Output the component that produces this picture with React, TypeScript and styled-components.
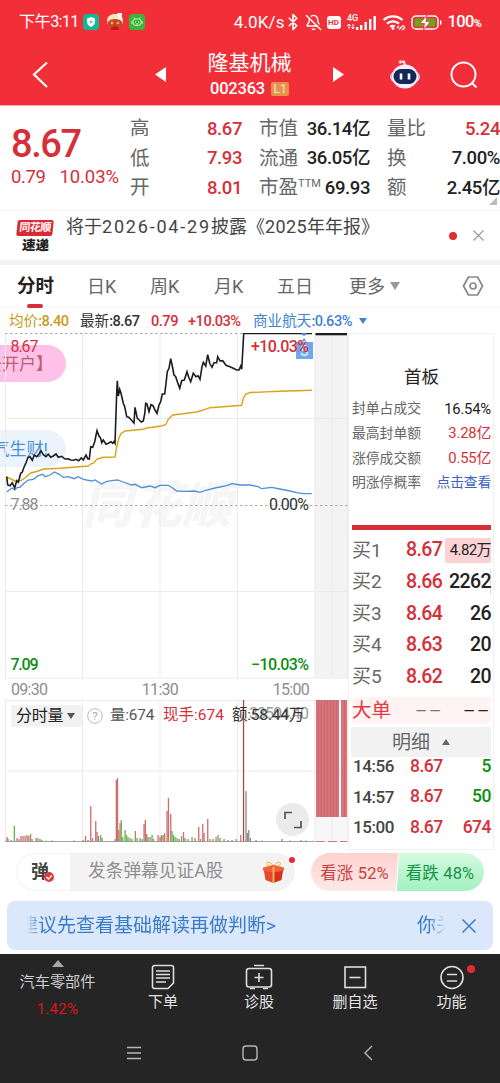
import React from "react";
import styled, { createGlobalStyle } from "styled-components";
import { BellOff, Bluetooth } from "lucide-react";

const RED = "#d5303a";
const GREEN = "#0a8f12";

const GlobalStyle = createGlobalStyle`
  * { box-sizing: border-box; }
  body {
    margin: 0;
    background: white;
    font-family: Roboto, "Noto Sans CJK SC", sans-serif;
    color: #222;
  }
  svg { display: block; flex: none; }
`;

const Page = styled.div`
  width: 500px;
  height: 1083px;
  overflow: hidden;
  display: flex;
  flex-direction: column;
  white-space: nowrap;
`;

type TxtProps = { $size?: number; $color?: string; $weight?: number; $ls?: number };

const Txt = styled.span<TxtProps>`
  font-size: ${(p) => p.$size ?? 16}px;
  line-height: 1;
  color: ${(p) => p.$color ?? "inherit"};
  font-weight: ${(p) => p.$weight ?? 400};
  letter-spacing: ${(p) => p.$ls ?? 0}px;
`;

/* ---------- header ---------- */

const StatusBar = styled.div`
  height: 44px;
  padding: 0 18px 0 19px;
  background: #f22f38;
  color: #fff;
  display: flex;
  align-items: center;
  justify-content: space-between;
`;

const StatusGroup = styled.div<{ $gap: number }>`
  display: flex;
  align-items: center;
  gap: ${(p) => p.$gap}px;
`;

const HdBadge = styled.span`
  width: 14px;
  height: 13px;
  border-radius: 3px;
  background: #fff;
  color: #f22f38;
  font-size: 8px;
  font-weight: 700;
  line-height: 13px;
  text-align: center;
`;

const BluetoothIcon = styled(Bluetooth)`
  margin: 0 -2px 0 -6px;
`;

const TitleBar = styled.div`
  height: 61px;
  background: #f22f38;
  color: #fff;
  display: grid;
  grid-template-columns: 154px 194px 152px;
  align-items: center;
`;

const TitleLeft = styled.div`
  display: flex;
  align-items: center;
  justify-content: space-between;
  margin: 0 -12px 0 32px;
`;

const TitleCenter = styled.div`
  display: flex;
  flex-direction: column;
  align-items: center;
  gap: 7px;
  padding: 1px 3px 0 0;
`;

const CodeRow = styled.div`
  display: flex;
  align-items: center;
  gap: 6px;
`;

const LevelBadge = styled.span`
  width: 18px;
  height: 14px;
  border-radius: 2px;
  background: #e8924c;
  font-size: 12px;
  line-height: 15px;
  text-align: center;
  color: #ffe6cf;
`;

const TitleRight = styled.div`
  display: flex;
  align-items: center;
  margin-left: -15px;
`;

/* ---------- quote ---------- */

const Quote = styled.section`
  height: 105px;
  border-top: 1px solid #ffa9ad;
  display: grid;
  grid-template-columns: 113px 112px 111px 113px;
  column-gap: 17px;
  position: relative;
`;

const PriceBox = styled.div`
  padding: 19px 0 0 11px;
  display: flex;
  flex-direction: column;
  color: ${RED};
`;

const ChangeRow = styled.div`
  display: flex;
  gap: 14px;
  margin-top: 5px;
`;

const QuoteCol = styled.div`
  padding-top: 8px;
`;

const QuoteRow = styled.div`
  height: 29.6px;
  display: flex;
  align-items: center;
  justify-content: space-between;
  color: #666;
`;

const Sup = styled.sup`
  font-size: 11px;
  line-height: 0;
  vertical-align: 7px;
`;

const Corner = styled.i`
  position: absolute;
  right: 3px;
  bottom: 5px;
  border-left: 8px solid transparent;
  border-bottom: 8px solid #bbb;
`;

const News = styled.section`
  height: 50px;
  border-top: 1px solid #f3f3f3;
  display: flex;
  align-items: center;
`;

const NewsLogo = styled.div`
  width: 38px;
  margin-left: 16px;
  display: flex;
  flex-direction: column;
  align-items: center;
  gap: 3px;
`;

const LogoTop = styled.span`
  width: 36px;
  height: 16px;
  background: #dc2832;
  border-radius: 2px;
  transform: skewX(-6deg);
  color: #fff;
  font-weight: 700;
  font-size: 11px;
  line-height: 16px;
  letter-spacing: -0.6px;
  text-align: center;
`;

const LogoBottom = styled.span`
  font-size: 13.5px;
  font-weight: 900;
  line-height: 13px;
  transform: skewX(-4deg);
`;

const NewsText = styled.div`
  width: 383px;
  margin: -18px 0 0 12px;
  font-size: 18px;
  line-height: 1;
  color: #444;
`;

const Dot = styled.i<{ $size: number }>`
  width: ${(p) => p.$size}px;
  height: ${(p) => p.$size}px;
  border-radius: 50%;
  background: #e32b33;
`;

/* ---------- tabs ---------- */

const Tabs = styled.nav`
  height: 48px;
  border-top: 5px solid #f3f3f3;
  border-bottom: 1px solid #f5f5f5;
  display: flex;
  align-items: center;
  padding: 0 15px 0 17px;
`;

const Tab = styled.div<{ $active?: boolean; $width: number }>`
  width: ${(p) => p.$width}px;
  font-size: ${(p) => (p.$active ? 18.5 : 18)}px;
  line-height: 43px;
  font-weight: ${(p) => (p.$active ? 700 : 400)};
  color: ${(p) => (p.$active ? "#222" : "#666")};
  display: flex;
  align-items: center;
  position: relative;
  &::after {
    content: "";
    display: ${(p) => (p.$active ? "block" : "none")};
    position: absolute;
    left: 10px;
    bottom: 0;
    width: 16px;
    height: 4px;
    border-radius: 2px;
    background: ${RED};
  }
`;

const Triangle = styled.i<{ $w: number; $h: number; $color: string; $up?: boolean }>`
  display: inline-block;
  border-left: ${(p) => p.$w / 2}px solid transparent;
  border-right: ${(p) => p.$w / 2}px solid transparent;
  ${(p) => (p.$up ? "border-bottom" : "border-top")}: ${(p) => p.$h}px solid ${(p) => p.$color};
`;

const Legend = styled.div`
  height: 26px;
  display: flex;
  align-items: center;
  padding-left: 9px;
  margin-bottom: -1px;
`;

const LegendItem = styled.div<{ $width: number; $color: string }>`
  width: ${(p) => p.$width}px;
  color: ${(p) => p.$color};
  font-size: 14.6px;
  line-height: 18px;
  display: flex;
  align-items: center;
  b {
    font-weight: 500;
    font-size: 14.6px;
    letter-spacing: -0.5px;
  }
`;

/* ---------- market ---------- */

const Market = styled.section`
  display: grid;
  grid-template-columns: 348px 146px;
  height: 509px;
`;

const ChartCol = styled.div`
  display: flex;
  flex-direction: column;
`;

const PriceChart = styled.div`
  position: relative;
  height: 346px;
  overflow: hidden;
`;

const Bullet = styled.div<{ $top: number; $bg: string; $color: string; $pad: number }>`
  position: absolute;
  left: -40px;
  top: ${(p) => p.$top}px;
  width: 106px;
  height: 37px;
  padding-right: ${(p) => p.$pad}px;
  border-radius: 19px;
  background: ${(p) => p.$bg};
  color: ${(p) => p.$color};
  font-size: 17px;
  line-height: 38px;
  display: flex;
  justify-content: flex-end;
`;

const TimeAxis = styled.div`
  height: 21px;
  display: flex;
  justify-content: space-between;
  align-items: center;
  padding: 0 39px 0 11px;
`;

const VolumeChart = styled.div`
  position: relative;
  height: 142px;
`;

const VolumeHead = styled.div`
  position: absolute;
  top: 5px;
  left: 11px;
  height: 22px;
  display: flex;
  align-items: center;
`;

const VolumeSelect = styled.div`
  width: 71px;
  height: 22px;
  background: #f2f2f2;
  display: flex;
  align-items: center;
  gap: 4px;
  padding-left: 5px;
  margin-right: 5px;
`;

const Expand = styled.div`
  position: absolute;
  left: 276px;
  top: 103px;
  width: 33px;
  height: 33px;
  border-radius: 50%;
  background: #ebebeb;
  display: grid;
  place-items: center;
`;

const Book = styled.div`
  border: 1px solid #f2f2f2;
  padding: 0 2px 0 3px;
  display: flex;
  flex-direction: column;
`;

const BoardTitle = styled.h2`
  margin: 33px 0 10px;
  font-size: 17.5px;
  line-height: 20px;
  font-weight: 400;
  text-align: center;
`;

const StatRow = styled.div`
  height: 24.6px;
  display: flex;
  align-items: center;
  justify-content: space-between;
`;

const RedBar = styled.div`
  height: 5px;
  margin-top: 30px;
  margin-bottom: 4px;
  background: ${RED};
`;

const BidRow = styled.div<{ $fill: number }>`
  height: 31.6px;
  display: grid;
  grid-template-columns: 54px 39px 1fr;
  align-items: center;
  background: linear-gradient(#fbd3d5, #fbd3d5) right center / ${(p) => p.$fill}px 25px no-repeat;
  > :last-child { text-align: right; }
`;

const BigOrder = styled.div`
  height: 27px;
  margin-top: 5px;
  background: #fff3f3;
  border-radius: 4px;
  display: grid;
  grid-template-columns: 54px 37px 1fr;
  align-items: center;
  > :not(:first-child) { text-align: right; }
`;

const DetailHead = styled.div`
  height: 30px;
  margin-top: 3px;
  margin-left: -1px;
  background: #f2f2f3;
  display: flex;
  align-items: center;
  justify-content: center;
  gap: 12px;
`;

const TradeRow = styled.div`
  height: 30.5px;
  margin-top: -6px;
  margin-bottom: 6px;
  padding-left: 1px;
  display: grid;
  grid-template-columns: 57px 33px 1fr;
  align-items: center;
  > :last-child { text-align: right; }
`;

/* ---------- danmaku + banner ---------- */

const Danmaku = styled.section`
  height: 38px;
  margin: 11px 16px 0;
  display: flex;
`;

const InputPill = styled.div`
  width: 279px;
  height: 38px;
  border-radius: 19px;
  background: #f3f3f3;
  display: flex;
  align-items: center;
  position: relative;
`;

const DanmakuIcon = styled.div`
  width: 55px;
  height: 38px;
  border: 1px solid #f3f3f3;
  border-radius: 19px 0 0 19px;
  background: #fff;
  padding-left: 14px;
  display: flex;
  align-items: center;
  margin-right: 17px;
  svg { margin: 10px 0 0 -5px; }
`;

const PillDot = styled(Dot)`
  position: absolute;
  right: 0;
  top: 4px;
`;

const Vote = styled.div<{ $up?: boolean }>`
  width: ${(p) => (p.$up ? 87 : 88)}px;
  height: 38px;
  display: grid;
  place-items: center;
  font-size: 16.5px;
  letter-spacing: 0.15px;
  ${(p) =>
    p.$up
      ? `margin-left: 16px;
         border-radius: 19px 0 0 19px;
         color: #c9403f;
         background: linear-gradient(#fdd3d0, #fde9e8);
         clip-path: polygon(0 0, 100% 0, 97.5% 100%, 0 100%);`
      : `margin-left: -2px;
         border-radius: 0 19px 19px 0;
         color: #149346;
         background: linear-gradient(#d3fae0, #a4f1c0);
         clip-path: polygon(3.5% 0, 100% 0, 100% 100%, 1% 100%);`}
`;

const Banner = styled.section`
  height: 49px;
  margin: 10px 7px 4px;
  border-radius: 8px;
  background: #dbe8fb;
  display: flex;
  align-items: center;
  color: #3a7bc8;
`;

const Marquee = styled.div`
  width: 418px;
  margin-left: 20px;
  overflow: hidden;
  font-size: 19px;
  line-height: 30px;
  mask-image: linear-gradient(90deg, transparent, #000 14px, #000 402px, transparent);
  display: flex;
  justify-content: space-between;
  > :first-child { margin-left: -8px; }
  > :last-child { margin-right: -10px; }
`;

/* ---------- bottom ---------- */

const Bottom = styled.footer`
  flex: 1;
  background: #252525;
  color: #e3e3e3;
`;

const NavRow = styled.div`
  height: 76px;
  display: grid;
  grid-template-columns: 115px 96px 96px 96px 97px;
`;

const NavItem = styled.div`
  display: flex;
  flex-direction: column;
  align-items: center;
  padding-top: 10px;
  gap: 5px;
  position: relative;
`;

const SectorItem = styled.div`
  display: flex;
  flex-direction: column;
  align-items: center;
  padding-top: 6px;
`;

const NavDot = styled(Dot)`
  position: absolute;
  left: 64px;
  top: 11px;
`;

const SystemRow = styled.div`
  display: grid;
  grid-template-columns: 116px 121px 10px;
  padding: 14px 0 0 126px;
`;

/* ---------- data ---------- */

const pricePoints =
  "6.7,143.7 7.7,152 10,152.7 12.3,149.7 14.7,155 16.7,147.7 18.3,149.3 20.7,140.3 22.3,139 24,134.3 26,129.7 28,124.3 30,123.7 32.3,127.3 34.3,122 36.7,123.7 39,121 41,117.7 43.3,121.7 46,123.7 48.3,121.3 50.7,124.3 53.3,123 56,121 58.3,124.3 61.7,123.3 65,126 68.3,125.7 70.7,127 73.3,127.3 76,126.3 78.7,127.7 81.3,125 83.3,127 86,122 87.7,125.7 89.3,126 90.7,113.7 92.7,114.3 94.7,108.7 97,97.7 99,103 100.7,105.3 101.7,109.7 103.3,107 106,111.3 108.3,110.3 111,108.7 112.7,110.3 114,108.7 115,110.3 116,80.3 116.7,60.3 117.3,47.7 118.3,63 119.7,56.3 121,60.3 123.3,70.3 124.7,73.7 126.7,83.7 128.7,84.3 131.3,87 134,90 135,74.3 137.3,85.3 139.3,87 141.3,89 143.3,88 144.7,81 145.7,70.3 147,71 149,78.7 151,71.7 153,72.7 155,77 157,80.3 159,72 160.7,68.7 162.3,61 164.7,61 166,50.3 167.3,38.7 169,35.3 170.7,25.7 172.3,33 174,42 175.7,43.7 177.7,49.7 179.7,55.3 181.7,47.7 184.3,47 187,38.7 188.7,44.3 190.7,48.7 193.3,40.3 196,43.7 198,42.7 200,46.3 202,33.7 203.3,29.3 205.7,33 207.7,21.7 209.7,30.3 212,34.3 214,29.7 216.7,29.7 217.7,23.7 220,28 222.7,27.7 226,32.3 230,33.7 233.3,35.3 236.7,37 239,37 240.7,33 241.7,36.3 243,13.7 243.7,0.5 312,0.5";

const avgPoints =
  "6.7,144 15,148 20,148 25,145 30.7,140 36.7,138.5 43.3,136 60,135.3 88.3,133 90.7,131 94,129.7 96.7,126.3 103,124.3 115,124 116.7,114 118.3,107 120.7,101 125,98 143.3,96.3 146.7,95 160,93.3 165.7,91.7 168.3,86.3 172.7,82 183,80.7 196.7,79 205,76.3 210,74.7 223,73.7 241.7,72.3 243.3,65.3 246,61 250,59.5 280,58.3 312,57.3";

const sectorPoints =
  "6.7,159 9.3,157 12,155 14.7,157 17.3,154.3 20,154.3 24,150.3 28.3,147 33.3,146.3 38.3,142.7 42.7,141.3 45,143.7 50,142 54.3,139 59.3,141.3 63.3,144.3 68.3,143.7 74,145.7 78.3,143.7 83.3,146.3 91.7,148 95,147 101.7,151 106,148.7 111.7,147.7 117.3,147 123.3,149 131.7,152 135,151.3 141.7,154.7 150,153 155,154.7 160,152.3 168.3,152.3 172.7,155 176.7,158 185,158.3 195,158 200,159.3 206.7,157 215,155 226.7,152.7 232,150.7 240,152 250,152 258,153.7 261.7,155.7 271.7,154.3 280,156 290,158 296.7,159.7 303,160.7 311.7,160.7";

const R = "#d36a6c";
const G = "#62b34c";
const N = "#8b8b8b";

// x, height, colour
const volumeBars: [number, number, string][] = [
  [7, 5, R], [8, 3, N], [11, 2, G], [14.3, 16, G], [17, 4, R], [19, 3, N], [21, 6, R],
  [23, 6, R], [25, 6, R], [27, 7, R], [28.7, 6, G], [30.5, 8, R], [32, 3, N], [36, 4, R], [38, 4, G],
  [40, 3, R], [42, 2, G], [46, 1.5, N], [52, 1.5, N], [58, 1, N], [66, 1, N], [74, 1.5, N],
  [83, 2, N], [85.5, 6, R], [88, 2, R], [90.7, 36, R], [92.5, 4, N], [95.7, 21, R], [97, 10, R],
  [98.5, 6, N], [100.7, 7, G], [102, 4, G], [115, 3, N], [116.3, 62, R], [117.5, 64, R],
  [118.8, 12, R], [120, 19, G], [121.2, 22, "#a58a62"], [122.8, 5, G], [125, 12, G], [126.5, 7, G],
  [128, 5, G], [130, 4, G], [132, 3, G], [135.3, 11, "#a58a62"], [137, 4, G], [140, 4, G],
  [142, 3, N], [144, 18, R], [145.3, 22, R], [146.7, 8, N], [148, 5, G], [150, 5, R],
  [152, 7, G], [153.5, 3, G], [158, 7, R], [160, 5, R], [161.5, 7, R], [163, 7, G], [164.5, 9, R],
  [167, 31, R], [168.4, 44, R], [170.7, 28, R], [172, 11, G], [173.5, 7, G], [175, 5, G],
  [177, 4, G], [179, 3, R], [181.5, 6, G], [183.5, 10, R], [185, 4, N], [188, 3, G], [192, 5, G],
  [195, 4, R], [198.7, 15, R], [200.5, 3, G], [202.7, 18, R], [204, 9, R], [207.7, 23, R],
  [210, 3, G], [213, 3, R], [216, 5, "#a58a62"], [218, 7, "#a58a62"], [220, 4, G], [224, 3, N],
  [228, 2, R], [232, 2, N], [236, 3, G], [240.7, 7, R], [243.5, 142, "#b04448"], [246, 51, N],
  [247.5, 9, N], [248.7, 12, N], [250.3, 4, N], [256, 2, N], [262, 1.5, N], [270, 1, N],
  [282, 3, N], [290, 1.5, N], [301, 2, N], [306, 1.5, N],
];

const stats = [
  ["封单占成交", "16.54%", "#222"],
  ["最高封单额", "3.28亿", RED],
  ["涨停成交额", "0.55亿", RED],
  ["明涨停概率", "点击查看", "#3b62c4"],
];

const bids: [string, string, string, number][] = [
  ["买1", "8.67", "4.82万", 46],
  ["买2", "8.66", "2262", 1],
  ["买3", "8.64", "26", 0],
  ["买4", "8.63", "20", 0],
  ["买5", "8.62", "20", 0],
];

const trades = [
  ["14:56", "8.67", "5", GREEN],
  ["14:57", "8.67", "50", GREEN],
  ["15:00", "8.67", "674", RED],
];

const quoteCols: [React.ReactNode, string, string][][] = [
  [["高", "8.67", RED], ["低", "7.93", RED], ["开", "8.01", RED]],
  [["市值", "36.14亿", "#222"], ["流通", "36.05亿", "#222"], [<>市盈<Sup>TTM</Sup></>, "69.93", "#222"]],
  [["量比", "5.24", RED], ["换", "7.00%", "#222"], ["额", "2.45亿", "#222"]],
];

/* ---------- parts ---------- */

const GridLines = ({ height, rows }: { height: number; rows: number[] }) => (
  <g stroke="#ebebeb">
    {[5.5, 82.5, 160, 237.5, 315, 332, 347.5].map((x) => (
      <path key={x} d={`M${x} 0V${height}`} />
    ))}
    {rows.map((y) => (
      <path key={y} d={`M5 ${y}H348`} />
    ))}
  </g>
);

const Status = () => (
  <StatusBar>
    <StatusGroup $gap={4}>
      <Txt $size={16.3} $weight={400} $ls={-0.7}>下午3:11</Txt>
      <svg width="16" height="16" viewBox="0 0 16 16">
        <rect width="16" height="16" rx="3.5" fill="#12b894" />
        <path d="M8 3l4 1.400v3.400c0 2.600-1.800 4.200-4 5.200-2.200-1-4-2.600-4-5.200V4.400z" fill="#fff" />
        <path d="M8.700 5.200L6.500 8.300h1.400l-.5 2.300 2.200-3.100H8.200z" fill="#12b894" />
      </svg>
      <svg width="22" height="18" viewBox="-4 0 22 18">
        <path d="M0 8C0 3 4 1 8 1s8 2 8 7l-1 4H1z" fill="#f6e3c2" />
        <path d="M10 0h5v7h-3z" fill="#fff7e8" />
        <path d="M1 9c2-4 12-4 14 0v4c-1 4-13 4-14 0z" fill="#c8452b" />
        <circle cx="5" cy="10" r="1.300" fill="#f2b33d" />
        <circle cx="11" cy="10" r="1.300" fill="#f2b33d" />
        <path d="M4 17c0-5 8-5 8 0z" fill="#d30f16" />
      </svg>
      <svg width="16" height="16" viewBox="0 0 16 16">
        <rect width="16" height="16" rx="3.5" fill="#3db53a" />
        <rect x="4" y="5" width="8" height="6.500" rx="2.500" fill="none" stroke="#c6f0b9" />
        <path d="M5 3.500l1 1.500M11 3.500L10 5M6.500 7.500v1M9.500 7.500v1M6.500 10h3M3 7v3M13 7v3" stroke="#c6f0b9" />
      </svg>
    </StatusGroup>
    <StatusGroup $gap={5}>
      <Txt $size={17} $weight={400} $ls={0.1}>4.0K/s</Txt>
      <BluetoothIcon size={18} strokeWidth={2.2} />
      <BellOff size={17} strokeWidth={2} />
      <HdBadge>HD</HdBadge>
      <svg width="31" height="18" viewBox="0 0 31 18" fill="#fff">
        <text x="1" y="8" fontSize="9" fontWeight="500">4G</text>
        <path d="M3 11v5M1 13l2-2 2 2M7 16v-5M5.500 14L7 16l1.500-2" stroke="#fff" fill="none" />
        <path d="M10 14h2.400v3H10zM14 12h2.400v5H14zM18.500 9h2.400v8h-2.400zM23 6h2.400v11H23zM27.500 3h2.400v14h-2.400z" />
      </svg>
      <svg width="24" height="17" viewBox="0 0 24 17" fill="none" stroke="#fff" strokeWidth="2.300">
        <path d="M1.500 6a14 14 0 0 1 19 0M5 9.700a9 9 0 0 1 12 0M8.300 13a4 4 0 0 1 4.500-.5" />
        <circle cx="11" cy="14.500" r="1" fill="#fff" strokeWidth="1" />
        <path d="M15 14l2-2M17 15.500l3.500-3.500a1.600 1.600 0 0 1 2 2L20 16" strokeWidth="1.300" />
      </svg>
      <svg width="32" height="15" viewBox="0 0 32 15">
        <rect x="1" y="1" width="26" height="13" rx="4" fill="none" stroke="#fff" strokeWidth="1.500" />
        <rect x="3.500" y="3.500" width="21" height="8" rx="1.500" fill="#68a81b" />
        <path d="M29 5c2 0 2 5 0 5z" fill="#fff" />
        <path d="M16 0l-7 8.500h4.500L12.500 15l7-8.500H15z" fill="#fff" stroke="#f22f38" strokeWidth=".8" />
      </svg>
      <Txt $size={16.5} $weight={500} $ls={-0.6}>
        100<Txt $size={11} $weight={700}>%</Txt>
      </Txt>
    </StatusGroup>
  </StatusBar>
);

const Header = () => (
  <TitleBar>
    <TitleLeft>
      <svg width="16" height="28" viewBox="0 0 16 28" fill="none" stroke="#fff" strokeWidth="2.200">
        <path d="M15 1.500L2 13.500 15 26" />
      </svg>
      <svg width="11" height="15" viewBox="0 0 11 15"><path d="M11 0v15L0 7.500z" fill="#fff" /></svg>
    </TitleLeft>
    <TitleCenter>
      <Txt $size={21}>隆基机械</Txt>
      <CodeRow>
        <Txt $size={16.5} $weight={500} $ls={-0.2}>002363</Txt>
        <LevelBadge>L1</LevelBadge>
      </CodeRow>
    </TitleCenter>
    <TitleRight>
      <svg width="11" height="15" viewBox="0 0 11 15"><path d="M0 0v15l11-7.500z" fill="#fff" /></svg>
      <svg width="32" height="30" viewBox="0 0 32 30" style={{ marginLeft: 45 }}>
        <path d="M11 2l4-.5 1 4" fill="none" stroke="#f5e5f5" strokeWidth="2" />
        <circle cx="11.500" cy="2" r="1.800" fill="#f6c6d2" />
        <ellipse cx="16" cy="17" rx="15" ry="8" fill="#cfc6f2" />
        <ellipse cx="16" cy="16.500" rx="13" ry="12" fill="#f5f0fd" />
        <rect x="4.500" y="9" width="23" height="15" rx="7.500" fill="#16275a" />
        <path d="M12 13.500v6M20 13.500v6" stroke="#fff" strokeWidth="2.600" />
      </svg>
      <svg width="28" height="28" viewBox="0 0 28 28" fill="none" stroke="#fff" strokeWidth="1.900" style={{ marginLeft: 29 }}>
        <circle cx="13.500" cy="13.500" r="12" />
        <path d="M22 22l4.500 4.500" />
      </svg>
    </TitleRight>
  </TitleBar>
);

const IntradayChart = () => (
  <PriceChart>
    <Bullet $top={12} $pad={13} $bg="#ffc1e8" $color="#b8606c">去开户】</Bullet>
    <Bullet $top={97} $pad={18} $bg="#ebf3fd" $color="#4d90d8">和气生财!</Bullet>
    <svg width="348" height="346" viewBox="0 0 348 346" style={{ position: "relative" }}>
      <text x="82" y="190" fontSize="50" fontWeight="900" fontStyle="italic" fill="#f6f6f6">同花顺</text>
      <rect x="315" y="0" width="33" height="345" fill="#f3f3f4" />
      <GridLines height={345} rows={[85.5, 258.5, 345]} />
      <path d="M5 .5H312M5 172.500H348" stroke="#aaa" strokeDasharray="2.500 2.500" />
      <polyline points={sectorPoints} fill="none" stroke="#4f8fdc" strokeWidth="1.300" />
      <polyline points={avgPoints} fill="none" stroke="#d9a31a" strokeWidth="1.400" />
      <polyline points={pricePoints} fill="none" stroke="#1d1d1f" strokeWidth="1.600" />
      <path d="M315.500 .8H347" stroke="#1d1d1f" strokeWidth="3" />
      <rect x="296" y="9" width="17" height="17" fill="#70a8ee" />
      <path d="M301 1l3-2 3 2-3 2zM302 8l2-3 2 3z" fill="#4f8fdc" />
      <text x="300" y="22.500" fontSize="14" fontWeight="500" fill="#dcebff">S</text>
      <g fontSize="16" fontWeight="400">
        <text x="10.500" y="19" fill={RED} textLength="28">8.67</text>
        <text x="10.500" y="177" fill="#8d8d8d" textLength="28">7.88</text>
        <text x="10.500" y="337" fill={GREEN} fontWeight="500" textLength="28">7.09</text>
        <text x="251" y="19" fill={RED} fontWeight="500" textLength="58">+10.03%</text>
        <text x="269" y="177" fill="#333" textLength="40">0.00%</text>
        <text x="251" y="337" fill={GREEN} fontWeight="500" textLength="58">−10.03%</text>
      </g>
    </svg>
  </PriceChart>
);

const Volume = () => (
  <VolumeChart>
    <svg width="348" height="142" viewBox="0 0 348 142">
      <rect x="315" y="0" width="33" height="142" fill="#f7f7f7" />
      <GridLines height={142} rows={[0.5, 71]} />
      <text x="249" y="19" fontSize="16" fill="#9a9a9a" textLength="60">33504.40</text>
      {volumeBars.map(([x, h, c]) => (
        <rect key={x} x={x - 0.6} y={142 - h} width="1.3" height={h} fill={c} />
      ))}
      <rect x="316" y="0" width="23" height="117" fill="#d9737a" />
      <rect x="341" y="0" width="6" height="117" fill="#d9737a" />
      {[318, 321, 324, 327, 330, 333, 336, 344].map((x) => (
        <path key={x} d={`M${x}.5 0V117`} stroke="#c5666c" strokeWidth=".8" />
      ))}
      <path d="M5 141.500H315" stroke="#999" strokeWidth=".9" />
      <path d="M316 141.500H347" stroke="#d9737a" strokeDasharray="9 3" />
    </svg>
    <VolumeHead>
      <VolumeSelect>
        <Txt $size={16} $ls={-0.2}>分时量</Txt>
        <Triangle $w={8} $h={6} $color="#555" />
      </VolumeSelect>
      <svg width="16" height="16" viewBox="0 0 16 16">
        <circle cx="8" cy="8" r="7.300" fill="none" stroke="#b9b9b9" />
        <text x="8" y="12" fontSize="11.500" textAnchor="middle" fill="#aaa">?</text>
      </svg>
      <Txt $size={15.3} $color="#555" $ls={-0.1} style={{ width: 53, marginLeft: 7 }}>量:674</Txt>
      <Txt $size={15.5} $color={RED} $ls={0} style={{ width: 69 }}>现手:674</Txt>
      <Txt $size={15.5} $color="#333" $ls={-0.2}>额:58.44万</Txt>
    </VolumeHead>
    <Expand>
      <svg width="18" height="18" viewBox="0 0 18 18" fill="none" stroke="#555" strokeWidth="1.700">
        <path d="M1 8V1.500h7M17 10v6.500h-7" />
      </svg>
    </Expand>
  </VolumeChart>
);

const OrderBook = () => (
  <Book>
    <BoardTitle>首板</BoardTitle>
    {stats.map(([label, value, color]) => (
      <StatRow key={label}>
        <Txt $size={13.8} $color="#666">{label}</Txt>
        <Txt $size={label === "明涨停概率" ? 13.8 : 14.8} $color={color} $ls={-0.2}>{value}</Txt>
      </StatRow>
    ))}
    <RedBar />
    {bids.map(([label, price, amount, fill]) => (
      <BidRow key={label} $fill={fill}>
        <Txt $size={19} $color="#666">{label}</Txt>
        <Txt $size={19.5} $color={RED} $weight={500} $ls={-0.6}>{price}</Txt>
        <Txt $size={fill > 10 ? 15 : 19.5} $weight={fill > 10 ? 400 : 500} $ls={-0.6}>{amount}</Txt>
      </BidRow>
    ))}
    <BigOrder>
      <Txt $size={19.5} $color="#e23b40">大单</Txt>
      <Txt $size={19} $color="#777" $ls={1.5}>––</Txt>
      <Txt $size={19} $ls={1.5}>––</Txt>
    </BigOrder>
    <DetailHead>
      <Txt $size={19} $color="#666">明细</Txt>
      <Triangle $up $w={8} $h={6} $color="#666" />
    </DetailHead>
    {trades.map(([time, price, amount, color]) => (
      <TradeRow key={time}>
        <Txt $size={17} $color="#444" $weight={500} $ls={-0.4}>{time}</Txt>
        <Txt $size={17.5} $color={RED} $weight={500} $ls={-0.5}>{price}</Txt>
        <Txt $size={17.5} $color={color} $weight={500} $ls={-0.5}>{amount}</Txt>
      </TradeRow>
    ))}
  </Book>
);

const BottomBar = () => (
  <Bottom>
    <NavRow>
      <SectorItem>
        <Triangle $up $w={12} $h={7} $color="#a9a9a9" />
        <Txt $size={15.2} $color="#cfcfcf" style={{ marginTop: 8 }}>汽车零部件</Txt>
        <Txt $size={15} $color="#e0121b" $ls={0.3} style={{ marginTop: 12 }}>1.42%</Txt>
      </SectorItem>
      <NavItem>
        <svg width="24" height="26" viewBox="0 0 24 26" fill="none" stroke="#ddd" strokeWidth="1.600">
          <path d="M3.500 1.500h17a2 2 0 0 1 2 2V19l-5.500 5.500H3.500a2 2 0 0 1-2-2v-19a2 2 0 0 1 2-2zM5 7h14M5 10.500h14M5 14h14M5 18h10" />
        </svg>
        <Txt $size={15}>下单</Txt>
      </NavItem>
      <NavItem>
        <svg width="28" height="26" viewBox="0 0 28 26" fill="none" stroke="#ddd" strokeWidth="1.600">
          <rect x="1.500" y="4.500" width="25" height="18.500" rx="2.500" />
          <path d="M9 1.500h10M14 9v9M9.500 13.500h9M5 24.500h5M18 24.500h5" />
        </svg>
        <Txt $size={15}>诊股</Txt>
      </NavItem>
      <NavItem>
        <svg width="24" height="26" viewBox="0 0 24 26" fill="none" stroke="#ddd" strokeWidth="1.600">
          <rect x="2" y="3" width="20.500" height="20.500" />
          <path d="M6.500 13.500h11" />
        </svg>
        <Txt $size={15}>删自选</Txt>
      </NavItem>
      <NavItem>
        <svg width="26" height="26" viewBox="0 0 26 26" fill="none" stroke="#ddd" strokeWidth="1.600">
          <circle cx="13" cy="13.500" r="11" />
          <path d="M8 10.500h10M8 17h10" />
        </svg>
        <Txt $size={15}>功能</Txt>
        <NavDot $size={8} />
      </NavItem>
    </NavRow>
    <SystemRow>
      <svg width="16" height="18" viewBox="0 0 16 18" stroke="#b8b8b8" strokeWidth="1.300">
        <path d="M1 3.500h14M1 9h14M1 14.500h14" />
      </svg>
      <svg width="16" height="18" viewBox="0 0 16 18" fill="none" stroke="#b8b8b8" strokeWidth="1.400">
        <rect x="1" y="2" width="14" height="14" rx="3" />
      </svg>
      <svg width="10" height="18" viewBox="0 0 10 18" fill="none" stroke="#b8b8b8" strokeWidth="1.400">
        <path d="M9 2L2 9l7 7" />
      </svg>
    </SystemRow>
  </Bottom>
);

const App = () => (
  <Page>
    <GlobalStyle />
    <Status />
    <Header />
    <Quote>
      <PriceBox>
        <Txt $size={38} $weight={500} $ls={-1.4}>8.67</Txt>
        <ChangeRow>
          <Txt $size={18.5} $ls={-0.4}>0.79</Txt>
          <Txt $size={18.5} $ls={-0.1}>10.03%</Txt>
        </ChangeRow>
      </PriceBox>
      {quoteCols.map((col, i) => (
        <QuoteCol key={i}>
          {col.map(([label, value, color]) => (
            <QuoteRow key={value}>
              <Txt $size={19.5}>{label}</Txt>
              <Txt $size={18.5} $color={color} $weight={500} $ls={-0.4}>{value}</Txt>
            </QuoteRow>
          ))}
        </QuoteCol>
      ))}
      <Corner />
    </Quote>
    <News>
      <NewsLogo>
        <LogoTop>同花顺</LogoTop>
        <LogoBottom>速递</LogoBottom>
      </NewsLogo>
      <NewsText>
        将于<Txt $size={18} $ls={1.8}>2026-04-29</Txt>披露《<Txt $size={18} $ls={0.4}>2025</Txt>年年报》
      </NewsText>
      <Dot $size={8} />
      <svg width="11" height="11" viewBox="0 0 11 11" stroke="#999" strokeWidth="1.200" style={{ marginLeft: 16 }}>
        <path d="M.5 .5l10 10M10.500 .5l-10 10" />
      </svg>
    </News>
    <Tabs>
      <Tab $active $width={70}>分时</Tab>
      <Tab $width={63}>日K</Tab>
      <Tab $width={64}>周K</Tab>
      <Tab $width={63}>月K</Tab>
      <Tab $width={72}>五日</Tab>
      <Tab $width={113}>
        更多
        <Triangle $w={10} $h={8} $color="#999" style={{ marginLeft: 5 }} />
      </Tab>
      <svg width="22" height="22" viewBox="0 0 22 22" fill="none" stroke="#888" strokeWidth="1.700">
        <path d="M6.500 2h9L20.500 11l-5 9h-9l-5-9z" strokeLinejoin="round" />
        <circle cx="11" cy="11" r="3" />
      </svg>
    </Tabs>
    <Legend>
      <LegendItem $width={71} $color="#c99a1c">均价<b>:8.40</b></LegendItem>
      <LegendItem $width={71} $color="#333">最新<b>:8.67</b></LegendItem>
      <LegendItem $width={37} $color={RED}><b>0.79</b></LegendItem>
      <LegendItem $width={65} $color={RED}><b>+10.03%</b></LegendItem>
      <LegendItem $width={106} $color="#3f85cf">商业航天<b>:0.63%</b></LegendItem>
      <Triangle $w={8} $h={6} $color="#3f85cf" />
    </Legend>
    <Market>
      <ChartCol>
        <IntradayChart />
        <TimeAxis>
          <Txt $color="#8d8d8d" $ls={-0.7}>09:30</Txt>
          <Txt $color="#8d8d8d" $ls={-0.7}>11:30</Txt>
          <Txt $color="#8d8d8d" $ls={-0.7}>15:00</Txt>
        </TimeAxis>
        <Volume />
      </ChartCol>
      <OrderBook />
    </Market>
    <Danmaku>
      <InputPill>
        <DanmakuIcon>
          <Txt $size={18} $weight={700} $color="#444">弹</Txt>
          <svg width="10" height="10" viewBox="0 0 10 10">
            <circle cx="5" cy="5" r="5" fill="#dc3b3f" />
            <path d="M2.500 5l2 2 3.300-3.500" fill="none" stroke="#fff" strokeWidth="1.300" />
          </svg>
        </DanmakuIcon>
        <Txt $size={17.7} $color="#8f8f8f" style={{ width: 174 }}>发条弹幕见证A股</Txt>
        <svg width="23" height="24" viewBox="0 0 23 24">
          <path d="M11.500 6C7-1 2 3 6 6zM11.500 6C16-1 21 3 17 6z" fill="#fbe9c4" stroke="#edb75c" />
          <path d="M1.500 8l10 2.500v12.500l-8-3z" fill="#e9472b" />
          <path d="M21.500 8l-10 2.500v12.500l8-3z" fill="#d2331d" />
          <path d="M1 7.500L11.500 5 22 7.500v3l-10.500 2L1 10.500z" fill="#f2603c" />
          <path d="M11.500 7v16" stroke="#f6bb59" strokeWidth="1.800" />
        </svg>
        <PillDot $size={6} />
      </InputPill>
      <Vote $up>看涨 52%</Vote>
      <Vote>看跌 48%</Vote>
    </Danmaku>
    <Banner>
      <Marquee>
        <span>建议先查看基础解读再做判断&gt;</span>
        <span>你关</span>
      </Marquee>
      <svg width="14" height="14" viewBox="0 0 14 14" stroke="#3a7bc8" strokeWidth="1.500" style={{ marginLeft: 17 }}>
        <path d="M.5 .5l13 13M13.500 .5l-13 13" />
      </svg>
    </Banner>
    <BottomBar />
  </Page>
);

export default App;
